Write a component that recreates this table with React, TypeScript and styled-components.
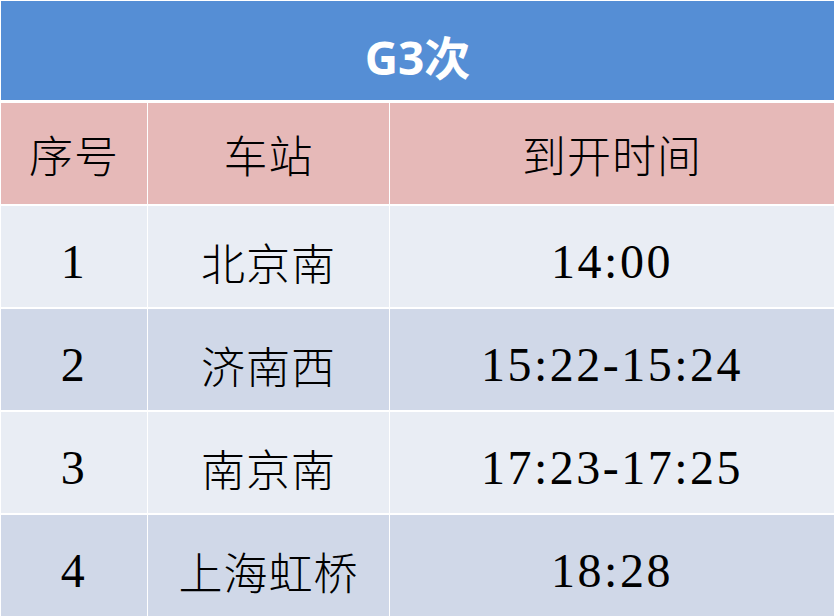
import styled, { createGlobalStyle } from "styled-components";

// styles

const GlobalStyle = createGlobalStyle`
  html, body {
    margin: 0;
    padding: 0;
    background: #ffffff;
  }
`;

const Page = styled.div`
  width: 836px;
  height: 616px;
  overflow: hidden;
  padding: 1px 2px 0 1px;
  box-sizing: border-box;
`;

const Title = styled.div`
  height: 99px;
  background: #558ed5;
  color: #ffffff;
  display: flex;
  align-items: center;
  justify-content: center;
  padding-top: 8px;
  box-sizing: border-box;
  font-family: "Open Sans", "Noto Sans CJK SC", sans-serif;
  font-weight: 700;
  font-size: 46px;
  letter-spacing: 0px;
`;

const Grid = styled.div`
  display: grid;
  grid-template-columns: 146px 241px 1fr;
  grid-auto-rows: 101px;
  column-gap: 1px;
  row-gap: 2px;
  margin-top: 3px;
`;

const Cell = styled.div<{ $bg: string; $latin?: boolean; $body?: boolean }>`
  background: ${(p) => p.$bg};
  display: flex;
  align-items: center;
  justify-content: center;
  box-sizing: border-box;
  padding-top: ${(p) => (p.$body ? "10px" : "0")};
  color: #000000;
  font-family: ${(p) =>
    p.$latin
      ? `"Liberation Serif", "Noto Sans CJK SC", serif`
      : `"Noto Sans CJK SC", serif`};
  font-size: ${(p) => (p.$latin ? "48px" : "44px")};
  font-weight: ${(p) => (p.$latin ? 400 : 300)};
  letter-spacing: ${(p) => (p.$latin ? "2.5px" : "1px")};
`;

const colors = {
  head: "#e6b9b8",
  light: "#e9edf4",
  dark: "#d0d8e8",
};

const rows = [
  { no: "1", station: "北京南", time: "14:00" },
  { no: "2", station: "济南西", time: "15:22-15:24" },
  { no: "3", station: "南京南", time: "17:23-17:25" },
  { no: "4", station: "上海虹桥", time: "18:28" },
];

const App = () => {
  return (
    <>
      <GlobalStyle />
      <Page>
        <Title>G3次</Title>
        <Grid>
          <Cell $bg={colors.head}>序号</Cell>
          <Cell $bg={colors.head}>车站</Cell>
          <Cell $bg={colors.head}>到开时间</Cell>
          {rows.map((r, i) => {
            const bg = i % 2 === 0 ? colors.light : colors.dark;
            return [
              <Cell key={`n${i}`} $bg={bg} $latin $body>
                {r.no}
              </Cell>,
              <Cell key={`s${i}`} $bg={bg} $body>
                {r.station}
              </Cell>,
              <Cell key={`t${i}`} $bg={bg} $latin $body>
                {r.time}
              </Cell>,
            ];
          })}
        </Grid>
      </Page>
    </>
  );
};

export default App;
